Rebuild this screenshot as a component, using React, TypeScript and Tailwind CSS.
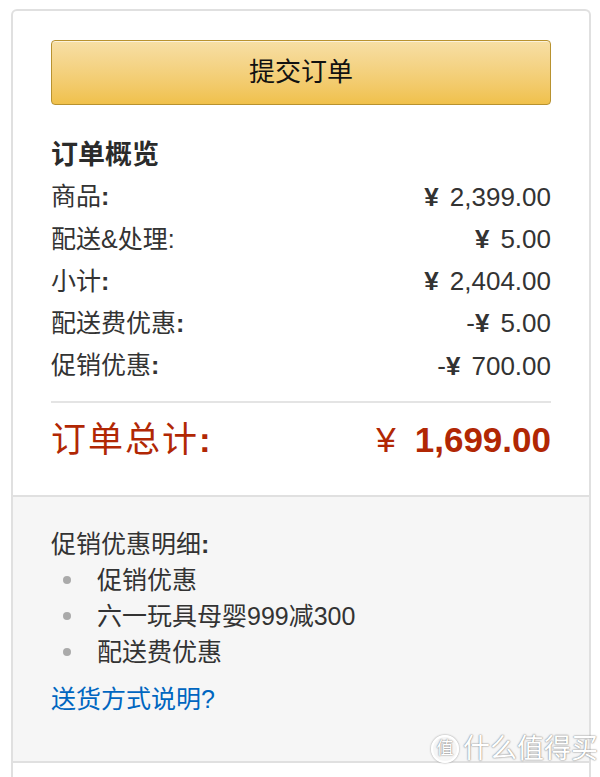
import React from "react";

type Line = { label: string; sign?: string; amount: string; thinColon?: boolean };

const lines: Line[] = [
  { label: "商品", amount: "2,399.00" },
  { label: "配送&处理", amount: "5.00", thinColon: true },
  { label: "小计", amount: "2,404.00" },
  { label: "配送费优惠", sign: "-", amount: "5.00" },
  { label: "促销优惠", sign: "-", amount: "700.00" },
];

const promos = ["促销优惠", "六一玩具母婴999减300", "配送费优惠"];

export default function App() {
  return (
    <div className="relative h-[777px] w-[600px] overflow-hidden bg-white font-[family-name:Liberation_Sans,Noto_Sans_CJK_SC,sans-serif] text-[#333]">
      <div className="ml-[11px] mt-[9px] w-[580px] rounded-t-[6px] border-2 border-b-0 border-[#e0e0e0]">
        {/* order summary */}
        <div className="px-[38px] pt-[29px] pb-[30px]">
          <button className="flex h-[65px] w-full items-center justify-center rounded-[4px] border border-[#b8922f] bg-gradient-to-b from-[#f7dfa5] to-[#f0c14b] text-[26px] text-[#111] shadow-[inset_0_1px_0_rgba(255,255,255,0.6)]">
            提交订单
          </button>

          <h2 className="mt-[29px] flex h-[42px] items-center text-[27px] font-bold text-[#2b2b2b]">
            订单概览
          </h2>

          <div className="flex flex-col">
            {lines.map((l) => (
              <div key={l.label} className="flex h-[42.25px] items-center justify-between">
                <span className="text-[25px]">
                  {l.label}
                  <span className={l.thinColon ? "font-normal" : "font-bold"}>:</span>
                </span>
                <span className="flex items-center text-[26px]">
                  {l.sign}
                  <span className="mr-[11px] font-bold">¥</span>
                  {l.amount}
                </span>
              </div>
            ))}
          </div>

          <div className="mt-[14px] h-[2px] bg-[#e4e4e4]" />

          <div className="mt-[12px] flex h-[50px] items-center justify-between text-[#b12704]">
            <span className="text-[35px] tracking-[2px]">
              订单总计<span className="font-bold">:</span>
            </span>
            <span className="flex items-center text-[35px]">
              <span className="mr-[19px]">¥</span>
              <span className="font-bold">1,699.00</span>
            </span>
          </div>
        </div>

        {/* promotion details */}
        <div className="border-y-2 border-[#e0e0e0] bg-[#f6f6f6] px-[38px] pt-[29px] pb-[44px] text-[25px]">
          <div className="flex h-[36px] items-center">
            促销优惠明细<span className="font-bold">:</span>
          </div>
          <ul className="flex flex-col">
            {promos.map((p) => (
              <li key={p} className="flex h-[36px] items-center">
                <span className="ml-[12px] mr-[26px] h-[8px] w-[8px] rounded-full bg-[#aaa]" />
                <span>{p}</span>
              </li>
            ))}
          </ul>
          <a className="mt-[11px] flex h-[36px] items-center text-[#0066c0]">送货方式说明?</a>
        </div>

        <div className="h-[40px] bg-white" />
      </div>

      {/* site watermark */}
      <div className="absolute right-[2px] bottom-[8px] flex items-center gap-[4px] text-[27px] text-white [text-shadow:0_0_2px_#888,0_0_1px_#888]">
        <span className="flex h-[28px] w-[28px] items-center justify-center rounded-full border-2 border-white text-[17px] shadow-[0_0_2px_#888]">
          值
        </span>
        <span>什么值得买</span>
      </div>
    </div>
  );
}
